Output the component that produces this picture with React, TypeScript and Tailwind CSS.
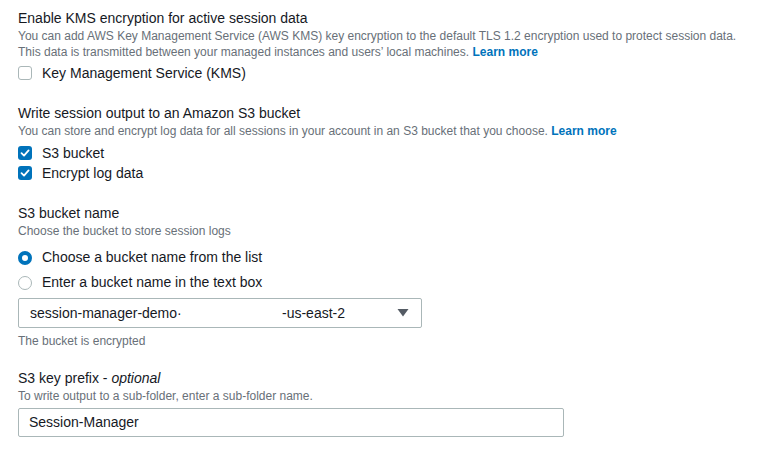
import React from "react";

const font = { fontFamily: '"Liberation Sans", Arial, sans-serif' };

function Checkbox({ checked, label }: { checked: boolean; label: string }) {
  return (
    <label className="flex items-center h-5 gap-[10px]">
      {checked ? (
        <span className="w-[14px] h-[14px] rounded-[3px] bg-[#0073bb] flex items-center justify-center">
          <svg width="10" height="10" viewBox="0 0 10 10">
            <path d="M1.5 5.2 L4 7.6 L8.6 2.4" fill="none" stroke="white" strokeWidth="1.8" strokeLinecap="round" strokeLinejoin="round" />
          </svg>
        </span>
      ) : (
        <span className="w-[14px] h-[14px] rounded-[3px] border border-[#aab7b8] bg-white" />
      )}
      <span className="text-[14px] text-[#16191f]">{label}</span>
    </label>
  );
}

function Radio({ checked, label }: { checked: boolean; label: string }) {
  return (
    <label className="flex items-center h-[25px] gap-[10px]">
      {checked ? (
        <span className="w-[14px] h-[14px] rounded-full border-[4px] border-[#0073bb] bg-white" />
      ) : (
        <span className="w-[14px] h-[14px] rounded-full border border-[#aab7b8] bg-white" />
      )}
      <span className="text-[14px] text-[#16191f]">{label}</span>
    </label>
  );
}

function Heading({ children }: { children: React.ReactNode }) {
  return <div className="text-[14px] leading-[20px] text-[#16191f]">{children}</div>;
}

function Desc({ children }: { children: React.ReactNode }) {
  return <p className="text-[12px] leading-[16px] text-[#687078]">{children}</p>;
}

export default function App() {
  return (
    <div className="w-[769px] h-[463px] bg-white px-[18px] pt-[8px] overflow-hidden" style={font}>
      {/* KMS */}
      <section>
        <Heading>Enable KMS encryption for active session data</Heading>
        <Desc>
          You can add AWS Key Management Service (AWS KMS) key encryption to the default TLS 1.2 encryption used to protect session data.
          <br />
          This data is transmitted between your managed instances and users’ local machines.{" "}
          <a className="font-bold text-[#0073bb]">Learn more</a>
        </Desc>
        <div className="mt-[3px]">
          <Checkbox checked={false} label="Key Management Service (KMS)" />
        </div>
      </section>

      {/* S3 output */}
      <section className="mt-[20px]">
        <Heading>Write session output to an Amazon S3 bucket</Heading>
        <Desc>
          You can store and encrypt log data for all sessions in your account in an S3 bucket that you choose.{" "}
          <a className="font-bold text-[#0073bb]">Learn more</a>
        </Desc>
        <div className="mt-[4px] flex flex-col">
          <Checkbox checked label="S3 bucket" />
          <Checkbox checked label="Encrypt log data" />
        </div>
      </section>

      {/* bucket name */}
      <section className="mt-[20px]">
        <Heading>S3 bucket name</Heading>
        <Desc>Choose the bucket to store session logs</Desc>
        <div className="mt-[6px] flex flex-col">
          <Radio checked label="Choose a bucket name from the list" />
          <Radio checked={false} label="Enter a bucket name in the text box" />
        </div>
        <div className="mt-[3px] w-[404px] h-[30px] border border-[#aab7b8] rounded-[2px] flex items-center pl-[11px] pr-[12px]">
          <span className="text-[14px] text-[#16191f] w-[252px]">session-manager-demo·</span>
          <span className="text-[14px] text-[#16191f] flex-1">-us-east-2</span>
          <svg width="12" height="10" viewBox="0 0 12 10">
            <path d="M0.5 1 L11.5 1 L6 8.5 Z" fill="#545b64" />
          </svg>
        </div>
        <div className="mt-[5px]">
          <Desc>The bucket is encrypted</Desc>
        </div>
      </section>

      {/* key prefix */}
      <section className="mt-[19px]">
        <Heading>
          S3 key prefix - <i>optional</i>
        </Heading>
        <Desc>To write output to a sub-folder, enter a sub-folder name.</Desc>
        <div className="mt-[4px] w-[546px] h-[29px] border border-[#aab7b8] rounded-[2px] flex items-center pl-[10px]">
          <span className="text-[14px] text-[#16191f]">Session-Manager</span>
        </div>
      </section>
    </div>
  );
}
